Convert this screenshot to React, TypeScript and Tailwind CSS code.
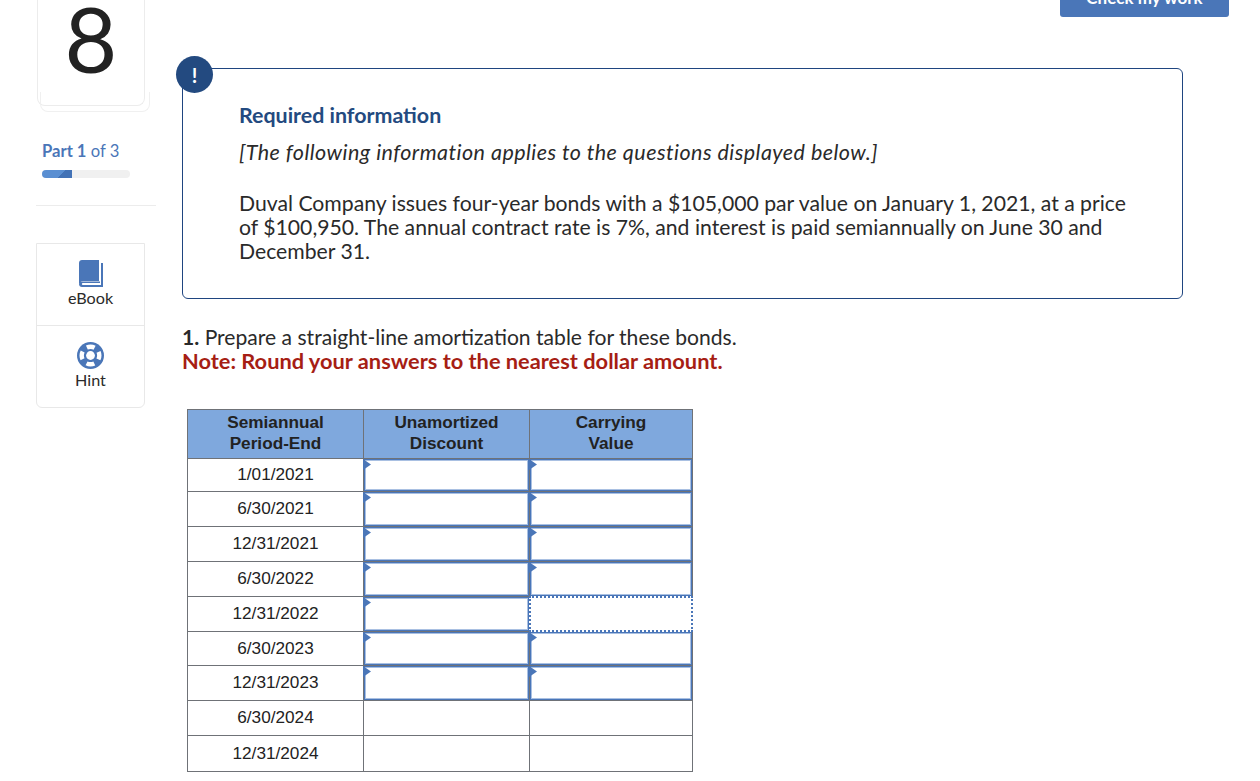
import React from 'react';

const rows = [
  { date: '1/01/2021', h: 'h-[33px]' },
  { date: '6/30/2021', h: 'h-[35px]' },
  { date: '12/31/2021', h: 'h-[35px]' },
  { date: '6/30/2022', h: 'h-[35px]' },
  { date: '12/31/2022', h: 'h-[35px]' },
  { date: '6/30/2023', h: 'h-[34px]' },
  { date: '12/31/2023', h: 'h-[35px]' },
  { date: '6/30/2024', h: 'h-[35px]' },
  { date: '12/31/2024', h: 'h-[36px]' },
];

function InputCell({ dotted, h }: { dotted?: boolean; h: string }) {
  if (dotted) {
    return (
      <td className={`${h} relative border border-[#6f7277] p-0`}>
        <div className="absolute -inset-px border-2 border-dotted border-[#4a76b8] bg-white" />
      </td>
    );
  }
  return (
    <td className={`${h} relative border border-[#6f7277] p-0`}>
      <div className="h-full border border-[#4a76b8] bg-white shadow-[inset_0_0_0_1px_#a9c0e2]" />
      <svg className="absolute -left-px top-0" width="9" height="11" viewBox="0 0 9 11">
        <path d="M0 0 L8 5.5 L0 11 Z" fill="#4a76b8" />
      </svg>
    </td>
  );
}

function BookIcon() {
  return (
    <svg width="24" height="27" viewBox="0 0 24 27">
      <path d="M3 0 H20 V21 H4 C2.5 21 1 22 1 23 L0 23 V3 C0 1.3 1.3 0 3 0 Z" fill="#4a76b8" />
      <path d="M22 3 H24 V27 H3 C1.3 27 0 25.7 0 24 C0 22.3 1.3 21.5 3 21.5 H21 V23 H4 C2.4 23 2.4 25 4 25 H22 Z" fill="#4a76b8" />
    </svg>
  );
}

function LifebuoyIcon() {
  return (
    <svg width="27" height="27" viewBox="0 0 27 27">
      <circle cx="13.5" cy="13.5" r="13.5" fill="#4a76b8" />
      <circle cx="13.5" cy="13.5" r="8.8" fill="none" stroke="#ffffff" strokeWidth="4.4" strokeDasharray="8 5.82" strokeDashoffset="4" />
      <circle cx="13.5" cy="13.5" r="4.4" fill="#ffffff" />
    </svg>
  );
}

export default function App() {
  return (
    <div className="relative h-[781px] w-[1260px] overflow-hidden bg-white font-['Lato',sans-serif] text-[#2a2a2a]">
      <div className="flex justify-end pr-[31px]">
        <button className="-mt-[18px] h-[35px] w-[169px] rounded-[3px] bg-[#4a76b8] pb-[3px] text-[17px] font-bold text-white">
          Check my work
        </button>
      </div>

      <div className="-mt-[17px] flex">
        <aside className="w-[182px] shrink-0 pl-[36px]">
          <div className="relative -mt-[40px] ml-px h-[146px] w-[108px] rounded-b-[8px] border border-t-0 border-[#ececec] bg-white">
            <div className="flex h-[144px] items-center justify-center pt-[10px] text-[91px] font-normal leading-none text-[#222222]">
              8
            </div>
            <div className="absolute -bottom-[7px] -right-[6px] h-[20px] w-[110px] rounded-b-[8px] border border-t-0 border-[#f0f0f0]" />
          </div>

          <p className="mt-[35px] pl-[6px] text-[16.6px] leading-[20px] text-[#4a76b8]">
            <span className="font-bold">Part 1</span> of 3
          </p>
          <div className="ml-[6px] mt-[9px] h-[8px] w-[88px] overflow-hidden rounded-full bg-[#f0f0f0]">
            <div className="h-full w-[30px] bg-[linear-gradient(135deg,#5a8fd2_0_62%,#4272b6_62%_100%)]" />
          </div>
          <div className="mt-[27px] h-px w-[120px] bg-[#ececec]" />

          <div className="mt-[37px] w-[109px] rounded-b-[6px] border border-[#e8e8e8]">
            <div className="flex h-[82px] flex-col items-center border-b border-[#e8e8e8] pt-[16px]">
              <BookIcon />
              <span className="mt-[1px] text-[16.2px] leading-[20px]">eBook</span>
            </div>
            <div className="flex h-[81px] flex-col items-center pt-[16px]">
              <LifebuoyIcon />
              <span className="mt-[1px] text-[16.2px] leading-[20px]">Hint</span>
            </div>
          </div>
        </aside>

        <main className="w-[1001px] pt-[68px]">
          <section className="relative h-[231px] rounded-[6px] border border-[#1f4580] pl-[56px] pt-[32px]">
            <div className="absolute -left-[7px] -top-[13px] flex h-[37px] w-[37px] items-center justify-center rounded-full bg-[#234a80] text-[20px] font-bold text-white">
              !
            </div>
            <h2 className="text-[21.4px] font-bold leading-[28px] text-[#234a80]">Required information</h2>
            <p className="mt-[9px] text-[21.5px] italic leading-[28px] tracking-[0.46px]">
              [The following information applies to the questions displayed below.]
            </p>
            <p className="mt-[25px] w-[897px] text-[21.2px] leading-[24px]">
              Duval Company issues four-year bonds with a $105,000 par value on January 1, 2021, at a price of $100,950. The annual contract rate is 7%, and interest is paid semiannually on June 30 and December 31.
            </p>
          </section>

          <p className="mt-[26px] text-[21.1px] leading-[24px]">
            <span className="font-bold">1.</span> Prepare a straight-line amortization table for these bonds.
          </p>
          <p className="text-[21.8px] font-bold leading-[24px] text-[#a61e14]">
            Note: Round your answers to the nearest dollar amount.
          </p>

          <table className="ml-[5px] mt-[36px] w-[505px] table-fixed border-collapse font-['Liberation_Sans',sans-serif] text-[17.2px] text-[#222222]">
            <colgroup>
              <col className="w-[176px]" />
              <col className="w-[166px]" />
              <col className="w-[163px]" />
            </colgroup>
            <thead>
              <tr className="h-[49px] bg-[#7fa8dd] text-center font-bold leading-[21px]">
                <th className="border border-[#6f7277] pb-[2px]">Semiannual<br />Period-End</th>
                <th className="border border-[#6f7277] pb-[2px]">Unamortized<br />Discount</th>
                <th className="border border-[#6f7277] pb-[2px]">Carrying<br />Value</th>
              </tr>
            </thead>
            <tbody>
              {rows.map((row, i) => (
                <tr key={row.date}>
                  <td className={`${row.h} border border-[#6f7277] text-center`}>{row.date}</td>
                  {i < 7 ? <InputCell h={row.h} /> : <td className={`${row.h} border border-[#6f7277]`} />}
                  {i < 7 ? <InputCell h={row.h} dotted={i === 4} /> : <td className={`${row.h} border border-[#6f7277]`} />}
                </tr>
              ))}
            </tbody>
          </table>
        </main>
      </div>
    </div>
  );
}
